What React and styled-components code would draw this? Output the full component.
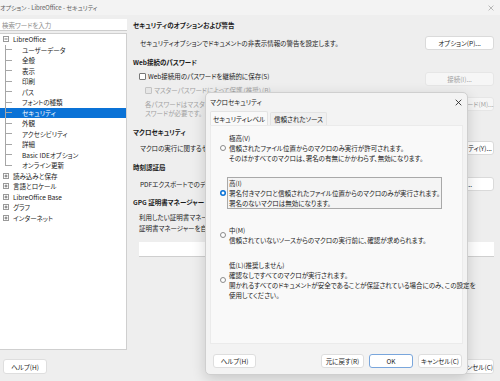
import React from "react";
import styled, { createGlobalStyle } from "styled-components";

const GlobalStyle = createGlobalStyle`
  html, body {
    margin: 0;
    padding: 0;
  }
  body {
    font-family: "Noto Sans CJK JP", "Noto Sans", sans-serif;
    font-feature-settings: "palt";
    font-size: 6.5px;
    color: #1b1b1b;
    background: #eeeeee;
  }
`;

const BLUE = "#0a72d6";
const LINE = "#a6a6a6";

const Window = styled.div`
  position: relative;
  width: 500px;
  height: 381px;
  display: flex;
  flex-direction: column;
  background: #eeeeee;
  overflow: hidden;
`;

const TitleBar = styled.div`
  height: 15px;
  display: flex;
  align-items: center;
  justify-content: space-between;
  padding-right: 6px;
  background: #f3f3f3;
  color: #5c5c5c;
  font-size: 6px;
  flex-shrink: 0;
`;

const Body = styled.div`
  flex: 1;
  min-height: 0;
  display: flex;
  padding-top: 4px;
`;

const Sidebar = styled.div`
  width: 127px;
  display: flex;
  flex-direction: column;
  gap: 2px;
  flex-shrink: 0;
`;

const SearchBox = styled.div`
  height: 12px;
  line-height: 12px;
  padding-left: 2px;
  background: #fff;
  color: #8c8c8c;
  border-bottom: 1px solid #cdcdcd;
  box-sizing: border-box;
`;

const Tree = styled.div`
  flex: 1;
  background: #fff;
  border: 1px solid #cfcfcf;
  border-left: none;
`;

const TreeRow = styled.div`
  height: 10.5px;
  display: flex;
  align-items: center;
  padding-left: ${(p) => (p.$child ? 0 : 3)}px;
  gap: ${(p) => (p.$child ? 0 : 4)}px;
  background: ${(p) => (p.$selected ? BLUE : "transparent")};
  color: ${(p) => (p.$selected ? "#fff" : "inherit")};
  white-space: nowrap;
`;

const Connector = styled.span`
  width: 22px;
  height: 100%;
  flex-shrink: 0;
  background:
    linear-gradient(${LINE}, ${LINE}) 5px 0 / 1px ${(p) => (p.$last ? "50%" : "100%")} no-repeat,
    linear-gradient(${LINE}, ${LINE}) 5px 50% / 7px 1px no-repeat;
`;

const Main = styled.div`
  flex: 1;
  min-width: 0;
  display: flex;
  flex-direction: column;
  padding: 0 6px;
`;

const Heading = styled.div`
  height: 12px;
  line-height: 12px;
  font-weight: 700;
  margin-top: ${(p) => p.$top || 0}px;
`;

const OptionRow = styled.div`
  display: flex;
  align-items: ${(p) => p.$align || "center"};
  justify-content: space-between;
  gap: 6px;
  padding-left: 7px;
  margin-top: ${(p) => p.$top || 0}px;
`;

const Desc = styled.div`
  flex: 1;
  min-width: 0;
  white-space: nowrap;
  overflow: hidden;
  line-height: 9px;
`;

const TextColumn = styled.div`
  flex: 1;
  min-width: 0;
  overflow: hidden;
  margin-left: -1px;
`;

const TextLine = styled.div`
  line-height: ${(p) => p.$lh || 9}px;
  white-space: nowrap;
  display: flex;
  align-items: center;
  gap: 2px;
  margin-top: ${(p) => p.$top || 0}px;
  padding-left: ${(p) => p.$indent || 0}px;
  color: ${(p) => (p.$disabled ? "#a2a2a2" : "inherit")};
`;

const ButtonStack = styled.div`
  display: flex;
  flex-direction: column;
  gap: 11px;
  flex-shrink: 0;
`;

const CheckBox = styled.span`
  width: 5px;
  height: 5px;
  border: 1px solid ${(p) => (p.$disabled ? "#c4c4c4" : "#777")};
  background: ${(p) => (p.$disabled ? "#e6e6e6" : "#fff")};
  border-radius: 1px;
  flex-shrink: 0;
`;

const SideButton = styled.div`
  width: 69px;
  height: 14px;
  box-sizing: border-box;
  display: flex;
  align-items: center;
  justify-content: center;
  background: ${(p) => (p.$disabled ? "#f6f6f6" : "#fff")};
  border: 1px solid ${(p) => (p.$disabled ? "#e6e6e6" : "#dadada")};
  border-radius: 3px;
  color: ${(p) => (p.$disabled ? "#a2a2a2" : "inherit")};
  flex-shrink: 0;
  white-space: nowrap;
`;

const InputBox = styled.div`
  height: 15px;
  margin: 8px 0 0 6px;
  background: #fff;
  border-bottom: 1px solid #cfcfcf;
  box-sizing: border-box;
`;

const Footer = styled.div`
  height: 31px;
  box-sizing: border-box;
  padding: 9px 6px 7px 3px;
  display: flex;
  justify-content: space-between;
  align-items: flex-start;
  flex-shrink: 0;
`;

const ButtonGroup = styled.div`
  display: flex;
  gap: 5px;
`;

const PushButton = styled.div`
  width: ${(p) => p.$w || 44}px;
  height: ${(p) => p.$h || 15}px;
  box-sizing: border-box;
  display: flex;
  align-items: center;
  justify-content: center;
  background: #fff;
  border: 1px solid ${(p) => (p.$primary ? "#79a6dc" : "#dedede")};
  border-radius: 3px;
  white-space: nowrap;
`;

/* macro security dialog floating over the options window */
const Dialog = styled.div`
  position: absolute;
  left: 205px;
  top: 92px;
  width: 263px;
  height: 283px;
  box-sizing: border-box;
  display: flex;
  flex-direction: column;
  background: #f3f3f3;
  border: 1px solid #cfcfcf;
  border-radius: 5px;
  box-shadow: 0 4px 14px rgba(0, 0, 0, 0.16);
`;

const DialogTitle = styled.div`
  height: 18px;
  display: flex;
  align-items: center;
  justify-content: space-between;
  padding: 0 5px 0 4px;
  flex-shrink: 0;
`;

const Tabs = styled.div`
  height: 14px;
  margin: 0 4px;
  display: flex;
  align-items: flex-end;
  gap: 2px;
  flex-shrink: 0;
`;

const Tab = styled.div`
  height: ${(p) => (p.$active ? 14 : 13)}px;
  padding: 0 ${(p) => (p.$active ? 2 : 3)}px;
  box-sizing: border-box;
  display: flex;
  align-items: center;
  justify-content: center;
  background: ${(p) => (p.$active ? "#f9f9f9" : "#f0f0f0")};
  border: 1px solid #e3e3e3;
  border-bottom: none;
  border-radius: 2px 2px 0 0;
  white-space: nowrap;
`;

const Panel = styled.div`
  height: 219px;
  margin: 0 4px;
  box-sizing: border-box;
  padding: 6px 0 0 9px;
  background: #f9f9f9;
  border: 1px solid #ebebeb;
  display: flex;
  flex-direction: column;
`;

const RadioGroup = styled.div`
  display: flex;
  align-items: center;
  gap: 1px;
  margin-top: ${(p) => p.$top || 0}px;
`;

const Radio = styled.span`
  width: 6px;
  height: 6px;
  border-radius: 50%;
  box-sizing: border-box;
  flex-shrink: 0;
  border: ${(p) => (p.$checked ? "none" : "1px solid #8a8a8a")};
  background: ${(p) =>
    p.$checked
      ? `radial-gradient(circle, #fff 0 1.3px, ${BLUE} 1.7px)`
      : "#fff"};
`;

const RadioLabel = styled.div`
  border: 1px solid ${(p) => (p.$focused ? "#a9a9a9" : "transparent")};
  background: ${(p) => (p.$focused ? "#f4f4f4" : "transparent")};
  padding: 0 1px;
  line-height: 10px;
  white-space: nowrap;
`;

const DialogButtons = styled.div`
  display: flex;
  justify-content: space-between;
  padding: 10px 5px 0 7px;
`;

const CloseIcon = ({ size = 7, color = "#333", weight = 1 }) => (
  <svg width={size} height={size} viewBox="0 0 10 10">
    <path d="M1 1 L9 9 M9 1 L1 9" stroke={color} strokeWidth={weight * 1.2} fill="none" />
  </svg>
);

const Expander = ({ open }) => (
  <svg width="6" height="6" viewBox="0 0 6 6" style={{ flexShrink: 0 }}>
    <rect x="0.5" y="0.5" width="5" height="5" fill="#fff" stroke="#9a9a9a" />
    <path d="M1.5 3 H4.5" stroke="#555" strokeWidth="0.8" />
    {!open && <path d="M3 1.5 V4.5" stroke="#555" strokeWidth="0.8" />}
  </svg>
);

const treeData = [
  {
    label: "LibreOffice",
    open: true,
    children: [
      "ユーザーデータ",
      "全般",
      "表示",
      "印刷",
      "パス",
      "フォントの種類",
      "セキュリティ",
      "外観",
      "アクセシビリティ",
      "詳細",
      "Basic IDEオプション",
      "オンライン更新",
    ],
  },
  { label: "読み込みと保存" },
  { label: "言語とロケール" },
  { label: "LibreOffice Base" },
  { label: "グラフ" },
  { label: "インターネット" },
];

const levels = [
  {
    title: "極高(V)",
    lines: [
      "信頼されたファイル位置からのマクロのみ実行が許可されます。",
      "そのほかすべてのマクロは、署名の有無にかかわらず、無効になります。",
    ],
    top: 0,
  },
  {
    title: "高(I)",
    lines: [
      "署名付きマクロと信頼されたファイル位置からのマクロのみが実行されます。",
      "署名のないマクロは無効になります。",
    ],
    checked: true,
    top: 13,
  },
  {
    title: "中(M)",
    lines: ["信頼されていないソースからのマクロの実行前に、確認が求められます。"],
    top: 15,
  },
  {
    title: "低(L)(推奨しません)",
    lines: [
      "確認なしですべてのマクロが実行されます。",
      "開かれるすべてのドキュメントが安全であることが保証されている場合にのみ、この設定を",
      "使用してください。",
    ],
    top: 13,
  },
];

const MacroDialog = () => (
  <Dialog>
    <DialogTitle>
      <span>マクロセキュリティ</span>
      <CloseIcon size={7} color="#222" />
    </DialogTitle>
    <Tabs>
      <Tab $active>セキュリティレベル</Tab>
      <Tab>信頼されたソース</Tab>
    </Tabs>
    <Panel>
      {levels.map((lv) => (
        <RadioGroup key={lv.title} $top={lv.top}>
          <Radio $checked={lv.checked} />
          <RadioLabel $focused={lv.checked}>
            <div>{lv.title}</div>
            {lv.lines.map((l) => (
              <div key={l}>{l}</div>
            ))}
          </RadioLabel>
        </RadioGroup>
      ))}
    </Panel>
    <DialogButtons>
      <PushButton $w={43} $h={14}>ヘルプ(H)</PushButton>
      <ButtonGroup>
        <PushButton $w={43} $h={14}>元に戻す(R)</PushButton>
        <PushButton $w={44} $h={14} $primary>OK</PushButton>
        <PushButton $w={44} $h={14}>キャンセル(C)</PushButton>
      </ButtonGroup>
    </DialogButtons>
  </Dialog>
);

const App = () => {
  return (
    <Window>
      <GlobalStyle />
      <TitleBar>
        <span>オプション - LibreOffice - セキュリティ</span>
        <CloseIcon size={6} color="#8a8a8a" weight={0.8} />
      </TitleBar>
      <Body>
        <Sidebar>
          <SearchBox>検索ワードを入力</SearchBox>
          <Tree>
            {treeData.map((node) => (
              <React.Fragment key={node.label}>
                <TreeRow>
                  <Expander open={node.open} />
                  <span>{node.label}</span>
                </TreeRow>
                {node.open &&
                  node.children.map((c, i) => (
                    <TreeRow key={c} $child $selected={c === "セキュリティ"}>
                      <Connector $last={i === node.children.length - 1} />
                      <span>{c}</span>
                    </TreeRow>
                  ))}
              </React.Fragment>
            ))}
          </Tree>
        </Sidebar>
        <Main>
          <Heading>セキュリティのオプションおよび警告</Heading>
          <OptionRow $top={5}>
            <Desc>セキュリティオプションでドキュメントの非表示情報の警告を設定します。</Desc>
            <SideButton>オプション(P)...</SideButton>
          </OptionRow>

          <Heading $top={6}>Web接続のパスワード</Heading>
          <OptionRow $top={4} $align="flex-start">
            <TextColumn>
              <TextLine>
                <CheckBox />
                Web接続用のパスワードを継続的に保存(S)
              </TextLine>
              <TextLine $top={5} $indent={6} $disabled>
                <CheckBox $disabled />
                マスターパスワードによって保護（推奨）(B)
              </TextLine>
              <TextLine $top={5} $indent={6} $disabled>
                各パスワードはマスターパス
              </TextLine>
              <TextLine $indent={6} $disabled>
                スワードが必要です。
              </TextLine>
            </TextColumn>
            <ButtonStack>
              <SideButton $disabled>接続(I)...</SideButton>
              <SideButton $disabled>マスターパスワード(M)...</SideButton>
            </ButtonStack>
          </OptionRow>

          <Heading $top={8}>マクロセキュリティ</Heading>
          <OptionRow $top={3}>
            <Desc>マクロの実行に関するセキュリ</Desc>
            <SideButton>マクロセキュリティ(Y)...</SideButton>
          </OptionRow>

          <Heading $top={6}>時刻認証局</Heading>
          <OptionRow $top={4}>
            <Desc>PDFエクスポートでのデジタル</Desc>
            <SideButton>TSA(T)...</SideButton>
          </OptionRow>

          <Heading $top={5}>GPG 証明書マネージャー</Heading>
          <TextLine $top={4} $indent={6} $lh={11}>
            利用したい証明書マネージャー
          </TextLine>
          <TextLine $indent={6} $lh={11}>
            証明書マネージャーを自動的
          </TextLine>
          <InputBox />
        </Main>
      </Body>
      <Footer>
        <PushButton>ヘルプ(H)</PushButton>
        <ButtonGroup>
          <PushButton $w={40}>キャンセル(C)</PushButton>
        </ButtonGroup>
      </Footer>
      <MacroDialog />
    </Window>
  );
};

export default App;
